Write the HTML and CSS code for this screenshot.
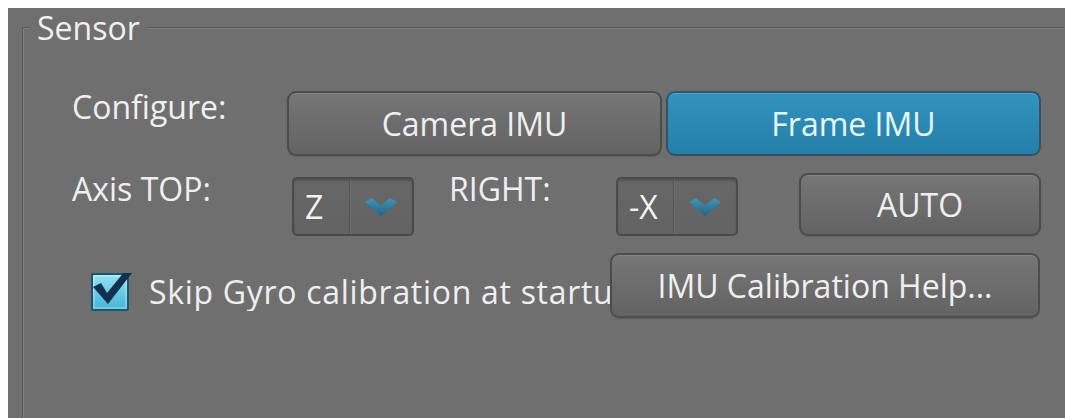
FILE: index.html
```html
<!DOCTYPE html>
<html lang="en">
<head>
<meta charset="utf-8">
<title>Sensor</title>
<link rel="stylesheet" href="styles.css">
</head>
<body>
<div class="panel">
  <section class="group">
    <h2 class="group-title">Sensor</h2>
    <div class="group-body">
      <div class="row row-configure">
        <span class="label label-configure">Configure:</span>
        <div class="toggle">
          <button class="btn">Camera IMU</button>
          <button class="btn btn-selected">Frame IMU</button>
        </div>
      </div>

      <div class="row row-axis">
        <span class="label label-top">Axis TOP:</span>
        <div class="combo">
          <span class="combo-value">Z</span>
          <span class="combo-arrow">
            <svg width="32" height="18" viewBox="0 0 32 18"><defs><linearGradient id="chev1" x1="0" y1="0" x2="0" y2="1"><stop offset="0" stop-color="#3f97ba"/><stop offset="1" stop-color="#1d6585"/></linearGradient></defs><polygon points="0,4 7,0 16,8 25,0 32,4 16,18" fill="url(#chev1)"/></svg>
          </span>
        </div>
        <span class="label label-right">RIGHT:</span>
        <div class="combo">
          <span class="combo-value">-X</span>
          <span class="combo-arrow">
            <svg width="32" height="18" viewBox="0 0 32 18"><defs><linearGradient id="chev2" x1="0" y1="0" x2="0" y2="1"><stop offset="0" stop-color="#3f97ba"/><stop offset="1" stop-color="#1d6585"/></linearGradient></defs><polygon points="0,4 7,0 16,8 25,0 32,4 16,18" fill="url(#chev2)"/></svg>
          </span>
        </div>
        <button class="btn btn-auto">AUTO</button>
      </div>

      <div class="row row-options">
        <label class="check">
          <span class="check-box">
            <svg class="check-mark" width="46" height="46" viewBox="0 0 46 46"><polygon points="2,21 10,17 16,27 38,0 44,3 17,38" fill="#10304c"/></svg>
          </span>
          <span class="check-text">Skip Gyro calibration at startup</span>
        </label>
        <button class="btn btn-help">IMU Calibration Help...</button>
      </div>
    </div>
  </section>
</div>
</body>
</html>
```
FILE: styles.css
```css
html, body {
  height: 100%;
  overflow: hidden;
}

body {
  margin: 8px 0 0 8px;
  background: #ffffff;
  font-family: "Open Sans", "DejaVu Sans", sans-serif;
  font-size: 32px;
  line-height: 32px;
  color: #eeeeee;
}

.panel {
  height: 410px;
  background: #6f6f6f;
  overflow: hidden;
}

/* titled group frame: runs past the panel's right and bottom edges,
   so only its etched top and left edges show */
.group {
  width: 1200px;
  height: 460px;
  margin: 19px 0 0 14px;
  border-top: 1px solid #5a5a5a;
  border-left: 1px solid #5a5a5a;
  box-shadow: inset 1px 1px 0 #7e7e7e;
}

.group-title {
  display: inline-block;
  margin: -17px 0 0 7px;
  padding: 0 7px;
  font-size: 32px;
  font-weight: normal;
  line-height: 34px;
  vertical-align: top;
  background: #6f6f6f;
  color: #f0f0f0;
}

.group-body {
  padding: 31px 0 0 49px;
}

.row {
  display: flex;
  align-items: flex-start;
}

.row-configure {
  height: 65px;
  margin-bottom: 17px;
}

.row-axis {
  height: 63px;
  margin-bottom: 17px;
}

.label {
  white-space: nowrap;
  color: #efefef;
}

.label-configure {
  width: 215px;
}

.label-top {
  width: 220px;
}

.label-right {
  width: 167px;
  margin-left: 35px;
}

/* buttons */
.btn {
  font: inherit;
  line-height: 32px;
  color: #efefef;
  border: 2px solid #4c4c4c;
  border-radius: 9px;
  background: linear-gradient(#767676 0%, #6d6d6d 45%, #636363 100%);
  box-shadow: inset 0 1px 0 rgba(255, 255, 255, 0.12), 0 1px 1px rgba(0, 0, 0, 0.15);
  padding: 0;
  text-align: center;
}

.toggle {
  display: flex;
  gap: 4px;
}

.toggle .btn {
  width: 375px;
  height: 65px;
}

.btn-selected {
  color: #e8f6fb;
  border-color: #2f5466;
  background: linear-gradient(#3394bf 0%, #2b89b4 50%, #247ea8 100%);
  box-shadow: inset 0 1px 0 rgba(255, 255, 255, 0.15);
}

.btn-auto {
  width: 242px;
  height: 63px;
  margin-left: 61px;
}

.btn-help {
  position: relative;
  width: 430px;
  height: 65px;
}

/* drop-down selectors */
.combo {
  display: flex;
  width: 122px;
  height: 59px;
  margin-top: 4px;
  box-sizing: border-box;
  border: 2px solid #4a4a4a;
  border-radius: 5px;
  background: linear-gradient(#676767, #636363);
  box-shadow: inset 0 2px 2px rgba(0, 0, 0, 0.18);
}

.combo-value {
  flex: 1;
  padding-left: 11px;
  display: flex;
  align-items: center;
  color: #f2f2f2;
}

.combo-arrow {
  width: 62px;
  display: flex;
  align-items: center;
  justify-content: center;
  border-left: 1px solid #555555;
  box-shadow: inset 1px 0 0 rgba(255, 255, 255, 0.06);
}

/* checkbox; its caption runs on under the help button */
.row-options {
  height: 65px;
}

.check {
  display: flex;
  align-items: center;
  width: 519px;
  height: 38px;
  margin: 20px 0 0 19px;
  gap: 20px;
  overflow: hidden;
}

.check-box {
  position: relative;
  flex: none;
  width: 38px;
  height: 38px;
  box-sizing: border-box;
  border: 2px solid #1c5670;
  border-radius: 2px;
  background: linear-gradient(#92e1f3, #43b5d8);
  box-shadow: inset 0 0 0 2px rgba(255, 255, 255, 0.25);
}

.check-mark {
  position: absolute;
  left: -2px;
  top: -9px;
}

.check-text {
  white-space: nowrap;
  letter-spacing: 0.7px;
  color: #efefef;
}
```
